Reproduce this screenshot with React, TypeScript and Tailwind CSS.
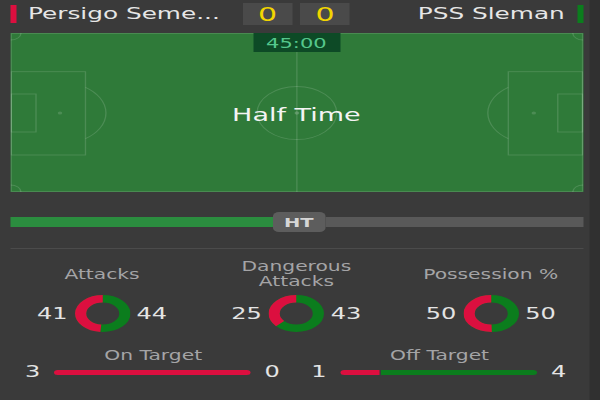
const donuts = [
  { label: ["Attacks"], home: 41, away: 44 },
  { label: ["Dangerous", "Attacks"], home: 25, away: 43 },
  { label: ["Possession %"], home: 50, away: 50 },
];

const bars = [
  { label: "On Target", home: 3, away: 0 },
  { label: "Off Target", home: 1, away: 4 },
];

export default function App() {
  return (
    // the whole widget is laid out 400px wide and stretched sideways, as in the capture
    <div className="h-[400px] w-[400px] origin-top-left scale-x-150 bg-[#303030] font-['DejaVu_Sans',Verdana,sans-serif]">
      <div className="h-full w-[393px] bg-[#3a3a3a] pl-[6.67px] pr-[4.5px]">
        <header className="grid h-[28px] grid-cols-[1fr_auto_1fr] items-center">
          <div className="flex min-w-0 items-center gap-2">
            <span className="h-[18px] w-[4px] shrink-0 bg-[#dc0f3f]" />
            <span className="whitespace-nowrap text-[16.5px] leading-none text-[#e6e6e6]">Persigo Seme...</span>
          </div>
          <div className="flex gap-[5.3px]">
            <Score value={0} />
            <Score value={0} />
          </div>
          <div className="flex items-center justify-end gap-2">
            <span className="whitespace-nowrap text-[16.5px] leading-none text-[#e6e6e6]">PSS Sleman</span>
            <span className="h-[18px] w-[4px] shrink-0 bg-[#0b7d1d]" />
          </div>
        </header>

        <Pitch />

        <div className="mt-5 flex h-[20px] items-center">
          <div className="h-[10px] w-[175px] bg-[#2b8d3f]" />
          <div className="flex h-[20px] w-[35px] items-center justify-center rounded-sm bg-[#5d5d5d] text-[13px] font-bold leading-none text-[#d6d6d6]">
            HT
          </div>
          <div className="h-[10px] flex-1 bg-[#595959]" />
        </div>

        <div className="mt-4 h-px bg-[#4b4b4b]" />

        <div className="-mx-[3.4px] mt-[10px] grid grid-cols-3">
          {donuts.map((d) => (
            <div key={d.label.join(" ")} className="flex flex-col items-center">
              <div className="flex h-[30px] flex-col justify-center text-center text-[13.5px] leading-[15px] text-[#a4a4a6]">
                {d.label.map((l) => (
                  <span key={l}>{l}</span>
                ))}
              </div>
              <div className="mt-[6px] flex items-center gap-[4.5px] text-[16px] leading-none text-[#e4e4e4]">
                <span>{d.home}</span>
                <Ring home={d.home} away={d.away} />
                <span>{d.away}</span>
              </div>
            </div>
          ))}
        </div>

        <div className="mt-4 grid grid-cols-2">
          {bars.map((b) => (
            <StatBar key={b.label} {...b} />
          ))}
        </div>
      </div>
    </div>
  );
}

function Score({ value }: { value: number }) {
  return (
    <div className="flex h-[22px] w-[33px] items-center justify-center bg-[#4a4a4a] text-[20px] leading-none text-[#f2d500]">
      {value}
    </div>
  );
}

function Pitch() {
  const line = "rgba(255,255,255,0.14)";
  return (
    <div className="relative mt-[5px] flex h-[159px] items-center justify-center bg-[#2f7a39] pt-[4px]">
      <svg className="absolute inset-0 h-full w-full" viewBox="0 0 382 159" preserveAspectRatio="none" fill="none" stroke={line} strokeWidth="0.9">
        <rect x="0.5" y="0.5" width="381" height="158" />
        <line x1="191" y1="0" x2="191" y2="159" />
        <circle cx="191" cy="80" r="26.5" />
        <circle cx="191" cy="80" r="1.2" fill={line} />
        {/* left half */}
        <rect x="0.5" y="38.7" width="49.5" height="83.3" />
        <rect x="0.5" y="61" width="16.5" height="38" />
        <circle cx="33" cy="80" r="1.5" fill={line} stroke="none" />
        <path d="M50 54.3 A31 31 0 0 1 50 105.7" />
        <path d="M0 7 A7 7 0 0 0 7 0" />
        <path d="M0 152 A7 7 0 0 1 7 159" />
        {/* right half */}
        <rect x="332" y="38.7" width="49.5" height="83.3" />
        <rect x="365" y="61" width="16.5" height="38" />
        <circle cx="349" cy="80" r="1.5" fill={line} stroke="none" />
        <path d="M332 54.3 A31 31 0 0 0 332 105.7" />
        <path d="M382 7 A7 7 0 0 1 375 0" />
        <path d="M382 152 A7 7 0 0 0 375 159" />
      </svg>
      <div className="absolute left-1/2 top-0 flex h-[19px] w-[58px] -translate-x-1/2 items-center justify-center bg-[#0d4a26] text-[14px] leading-none text-[#55c78c]">
        45:00
      </div>
      <span className="relative text-[18px] leading-none text-[#f4f4f4]">Half Time</span>
    </div>
  );
}

function Ring({ home, away }: { home: number; away: number }) {
  const r = 14.75;
  const c = 2 * Math.PI * r;
  const frac = home / (home + away);
  return (
    <svg width="37" height="37" viewBox="0 0 37 37">
      <circle cx="18.5" cy="18.5" r={r} fill="none" stroke="#0b7d1d" strokeWidth="7.5" />
      <circle
        cx="18.5"
        cy="18.5"
        r={r}
        fill="none"
        stroke="#dc0f3f"
        strokeWidth="7.5"
        strokeDasharray={`${frac * c} ${c}`}
        transform="translate(37 0) scale(-1 1) rotate(-90 18.5 18.5)"
      />
    </svg>
  );
}

function StatBar({ label, home, away }: { label: string; home: number; away: number }) {
  return (
    <div className="flex flex-col">
      <div className="text-center text-[13.5px] leading-[15px] text-[#a4a4a6]">{label}</div>
      <div className="flex h-[18px] items-center gap-[9px] pl-[10px] pr-[11px] text-[16px] leading-none text-[#e4e4e4]">
        <span>{home}</span>
        <div className="flex h-[5px] flex-1 gap-px">
          {home > 0 ? (
            <div className={away > 0 ? "rounded-l-full bg-[#dc0f3f]" : "rounded-full bg-[#dc0f3f]"} style={{ flex: home }} />
          ) : null}
          {away > 0 ? (
            <div className={home > 0 ? "rounded-r-full bg-[#0b7d1d]" : "rounded-full bg-[#0b7d1d]"} style={{ flex: away }} />
          ) : null}
        </div>
        <span>{away}</span>
      </div>
    </div>
  );
}
